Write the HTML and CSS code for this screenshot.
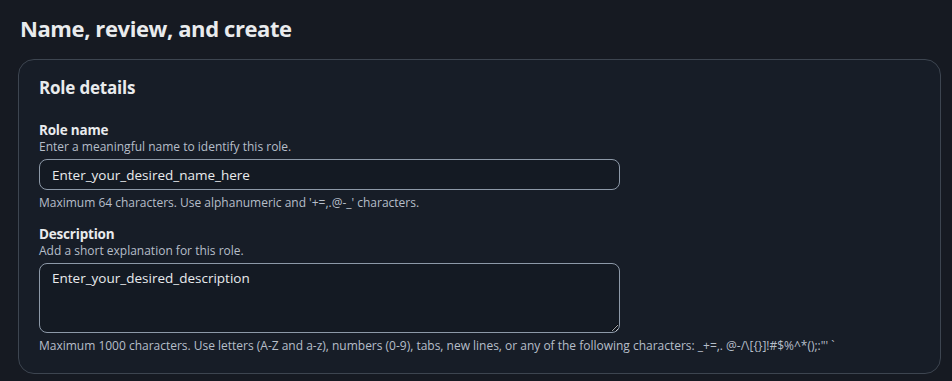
FILE: index.html
```html
<!DOCTYPE html>
<html lang="en">
  <head>
    <meta charset="UTF-8" />
    <meta name="viewport" content="width=device-width, initial-scale=1.0" />
    <title>Name, review, and create</title>
    <link rel="stylesheet" href="styles.css">
  </head>
  <body>
    <div class="page">
      <h1 class="page-title">Name, review, and create</h1>

      <div class="card">
        <h2 class="card-title">Role details</h2>

        <div class="field">
          <label class="field-label" for="roleName">Role name</label>
          <div class="field-desc">Enter a meaningful name to identify this role.</div>
          <input class="text-input" id="roleName" type="text" value="Enter_your_desired_name_here" />
          <div class="field-hint">Maximum 64 characters. Use alphanumeric and '+=,.@-_' characters.</div>
        </div>

        <div class="field">
          <label class="field-label" for="roleDesc">Description</label>
          <div class="field-desc">Add a short explanation for this role.</div>
          <textarea class="text-area" id="roleDesc">Enter_your_desired_description</textarea>
          <div class="field-hint">Maximum 1000 characters. Use letters (A-Z and a-z), numbers (0-9), tabs, new lines, or any of the following characters: _+=,. @-/\[{}]!#$%^*();:"' `</div>
        </div>
      </div>
    </div>
  </body>
</html>
```

FILE: styles.css
```css
* {
  margin: 0;
  padding: 0;
  box-sizing: border-box;
}

body {
  font-family: "Open Sans", "Noto Sans", sans-serif;
  background: #161a22;
  color: #e9ebed;
}

.page {
  padding: 12px 11px 0 18px;
}

.page-title {
  font-size: 22px;
  font-weight: 700;
  line-height: 32px;
  padding-left: 2px;
  margin-bottom: 15px;
  letter-spacing: -0.4px;
}

.card {
  background: #171d27;
  border: 1px solid #3d4550;
  border-radius: 16px;
  padding: 15px 20px 17px 20px;
  height: 315px;
}

.card-title {
  font-size: 17px;
  font-weight: 700;
  line-height: 26px;
  margin-bottom: 20px;
  letter-spacing: -0.2px;
}

.field {
  display: flex;
  flex-direction: column;
  margin-bottom: 14px;
}

.field-label {
  font-size: 13.5px;
  font-weight: 700;
  line-height: 18px;
  letter-spacing: -0.2px;
}

.field-desc,
.field-hint {
  font-size: 12px;
  line-height: 16px;
  color: #b6bec9;
}

.field-hint {
  margin-top: 5px;
  letter-spacing: -0.01px;
}

.text-input,
.text-area {
  width: 581px;
  background: #141a23;
  border: 1px solid #8d99a8;
  border-radius: 8px;
  color: #e9ebed;
  font-family: inherit;
  font-size: 13.5px;
  padding: 0 12px;
  margin-top: 4px;
  outline: none;
}

.text-input {
  height: 31px;
}

.text-area {
  height: 70px;
  padding-top: 4px;
  resize: vertical;
  line-height: 20px;
}
```
